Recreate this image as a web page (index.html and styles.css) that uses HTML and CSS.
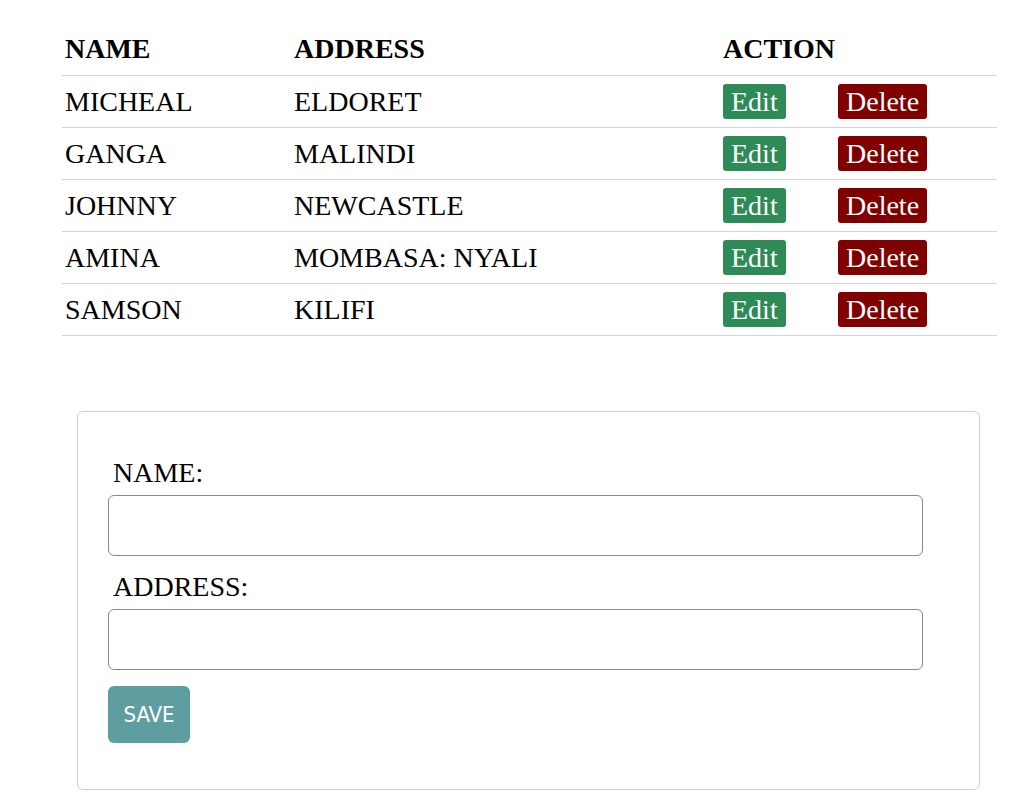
FILE: index.html
```html
<!DOCTYPE html>
<html lang="en">
<head>
<meta charset="utf-8">
<title>People</title>
<link rel="stylesheet" href="styles.css">
</head>
<body>
<main class="page">
  <table class="people">
    <colgroup>
      <col class="col-name">
      <col class="col-addr">
      <col class="col-edit">
      <col class="col-del">
    </colgroup>
    <thead>
      <tr><th>NAME</th><th>ADDRESS</th><th colspan="2">ACTION</th></tr>
    </thead>
    <tbody>
      <tr><td>MICHEAL</td><td>ELDORET</td><td><button class="btn btn-edit">Edit</button></td><td><button class="btn btn-del">Delete</button></td></tr>
      <tr><td>GANGA</td><td>MALINDI</td><td><button class="btn btn-edit">Edit</button></td><td><button class="btn btn-del">Delete</button></td></tr>
      <tr><td>JOHNNY</td><td>NEWCASTLE</td><td><button class="btn btn-edit">Edit</button></td><td><button class="btn btn-del">Delete</button></td></tr>
      <tr><td>AMINA</td><td>MOMBASA: NYALI</td><td><button class="btn btn-edit">Edit</button></td><td><button class="btn btn-del">Delete</button></td></tr>
      <tr><td>SAMSON</td><td>KILIFI</td><td><button class="btn btn-edit">Edit</button></td><td><button class="btn btn-del">Delete</button></td></tr>
    </tbody>
  </table>

  <form class="card">
    <label class="field-label" for="name">NAME:</label>
    <input class="field-input" id="name" type="text">
    <label class="field-label field-label-next" for="address">ADDRESS:</label>
    <input class="field-input" id="address" type="text">
    <button class="save" type="button">SAVE</button>
  </form>
</main>
</body>
</html>
```

FILE: styles.css
```css
html, body {
  margin: 0;
  padding: 0;
  background: #fff;
}

body {
  font-family: "Liberation Serif", "Times New Roman", serif;
  color: #000;
}

.page {
  padding: 24px 0 0 62px;
}

.people {
  border-collapse: collapse;
  table-layout: fixed;
  width: 935px;
  font-size: 28px;
}

.col-name { width: 229px; }
.col-addr { width: 429px; }
.col-edit { width: 115px; }
.col-del { width: 162px; }

.people th,
.people td {
  padding: 8px 3px;
  text-align: left;
  vertical-align: middle;
  line-height: 32px;
  border-bottom: 1px solid #d3d3d3;
}

.people th {
  font-weight: bold;
  padding: 9px 3px 10px;
}

.btn {
  font-family: inherit;
  font-size: 28px;
  line-height: 33px;
  padding: 1px 8px;
  border: 0;
  border-radius: 3px;
  color: #fff;
  display: block;
}

.btn-edit { background: #2e8b57; }
.btn-del { background: #800000; }

.card {
  margin: 75px 0 0 15px;
  width: 903px;
  box-sizing: border-box;
  border: 1px solid #cfcfcf;
  border-radius: 6px;
  padding: 45px 30px 46px;
  display: flex;
  flex-direction: column;
  align-items: flex-start;
}

.field-label {
  display: block;
  font-size: 28px;
  line-height: 32px;
  padding-left: 5px;
}

.field-label-next {
  margin-top: 15px;
}

.field-input {
  display: block;
  box-sizing: border-box;
  width: 815px;
  height: 61px;
  margin: 6px 0 0;
  border: 1px solid #8a8a8a;
  border-radius: 6px;
  background: #fff;
}

.save {
  margin-top: 16px;
  width: 82px;
  height: 57px;
  padding: 0;
  border: 0;
  border-radius: 6px;
  background: #5f9ea0;
  color: #fff;
  font-family: "DejaVu Sans Condensed", "Open Sans", sans-serif;
  font-stretch: condensed;
  font-size: 22px;
}
```
